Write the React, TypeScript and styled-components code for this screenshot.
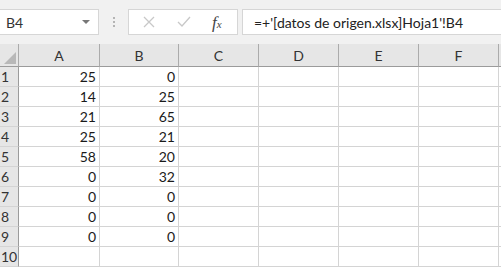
import React from "react";
import styled, { createGlobalStyle } from "styled-components";

const GlobalStyle = createGlobalStyle`
  html, body { margin: 0; padding: 0; background: #ffffff; }
  body { font-family: "Lato", "Open Sans", "Liberation Sans", sans-serif; color: #222; overflow: hidden; }
`;

const Page = styled.div`
  width: 501px;
  height: 268px;
  overflow: hidden;
  background: #ffffff;
`;

const Toolbar = styled.div`
  height: 44px;
  background: #f1f1f1;
  display: flex;
  align-items: center;
  box-sizing: border-box;
  padding-bottom: 0px;
`;

const NameBox = styled.div`
  width: 100px;
  height: 26px;
  margin-left: -1px;
  box-sizing: border-box;
  background: #fff;
  border: 1px solid #d6d6d6;
  display: flex;
  align-items: center;
  justify-content: space-between;
  padding: 0 8px 0 6px;
  font-size: 14px;
  color: #333;
`;

const Caret = styled.span`
  width: 0;
  height: 0;
  border-left: 4px solid transparent;
  border-right: 4px solid transparent;
  border-top: 4px solid #777;
`;

const Grip = styled.div`
  width: 2px;
  margin: 0 13px 0 14px;
  display: flex;
  flex-direction: column;
  gap: 2px;
  span { width: 2px; height: 2px; background: #b4b4b4; display: block; }
`;

const FxButtons = styled.div`
  width: 110px;
  height: 26px;
  box-sizing: border-box;
  background: #fff;
  border: 1px solid #d6d6d6;
  display: flex;
  align-items: center;
  padding-left: 14px;
  gap: 22px;
`;

const FxLabel = styled.span`
  font-family: "Liberation Serif", serif;
  font-style: italic;
  font-size: 17px;
  color: #444;
  margin-left: -1px;
  line-height: 1;
  sub { font-size: 11px; vertical-align: baseline; }
`;

const FormulaInput = styled.div`
  flex: 1;
  height: 26px;
  margin-left: 4px;
  margin-right: -1px;
  box-sizing: border-box;
  background: #fff;
  border: 1px solid #d6d6d6;
  display: flex;
  align-items: center;
  padding-left: 11px;
  font-size: 14px;
  color: #222;
  white-space: nowrap;
`;

const Grid = styled.div`
  display: grid;
  grid-template-columns: 19px 81px 79px 80px 80px 80px 80px 1fr;
  grid-template-rows: 23px repeat(10, 20px);
`;

const Corner = styled.div`
  position: relative;
  background: #e6e6e6;
  border-right: 1px solid #ababab;
  border-bottom: 1px solid #9b9b9b;
  &::after {
    content: "";
    position: absolute;
    right: 2px;
    bottom: 2px;
    width: 0;
    height: 0;
    border-left: 12px solid transparent;
    border-bottom: 12px solid #b8b8b8;
  }
`;

const ColHead = styled.div`
  background: #e6e6e6;
  border-right: 1px solid #ababab;
  border-bottom: 1px solid #9b9b9b;
  display: flex;
  align-items: center;
  justify-content: center;
  font-size: 14px;
  color: #333;
  padding-top: 1px;
`;

const RowHead = styled.div`
  background: #e6e6e6;
  border-right: 1px solid #9b9b9b;
  border-bottom: 1px solid #d4d4d4;
  display: flex;
  align-items: center;
  padding-left: 1px;
  font-size: 14px;
  color: #333;
`;

const Cell = styled.div`
  border-right: 1px solid #d4d4d4;
  border-bottom: 1px solid #d4d4d4;
  display: flex;
  align-items: center;
  justify-content: flex-end;
  padding-right: 3px;
  font-size: 14px;
  color: #1a1a1a;
`;

const cols = ["A", "B", "C", "D", "E", "F", ""];
const data: (number | null)[][] = [
  [25, 0],
  [14, 25],
  [21, 65],
  [25, 21],
  [58, 20],
  [0, 32],
  [0, 0],
  [0, 0],
  [0, 0],
  [null, null],
];

const XIcon = () => (
  <svg width="12" height="12" viewBox="0 0 12 12">
    <path d="M1 1L11 11M11 1L1 11" stroke="#c8c8c8" strokeWidth="1.3" fill="none" />
  </svg>
);

const CheckIcon = () => (
  <svg width="14" height="12" viewBox="0 0 14 12">
    <path d="M1 6L5 10L13 1" stroke="#c8c8c8" strokeWidth="1.3" fill="none" />
  </svg>
);

export default function App() {
  return (
    <Page>
      <GlobalStyle />
      <Toolbar>
        <NameBox>
          <span>B4</span>
          <Caret />
        </NameBox>
        <Grip>
          <span />
          <span />
          <span />
        </Grip>
        <FxButtons>
          <XIcon />
          <CheckIcon />
          <FxLabel>
            f<sub>x</sub>
          </FxLabel>
        </FxButtons>
        <FormulaInput>=+'[datos de origen.xlsx]Hoja1'!B4</FormulaInput>
      </Toolbar>
      <Grid>
        <Corner />
        {cols.map((c, i) => (
          <ColHead key={i}>{c}</ColHead>
        ))}
        {data.map((row, r) => (
          <React.Fragment key={r}>
            <RowHead>{r + 1}</RowHead>
            {cols.map((_, c) => (
              <Cell key={c}>{row[c] ?? ""}</Cell>
            ))}
          </React.Fragment>
        ))}
      </Grid>
    </Page>
  );
}
